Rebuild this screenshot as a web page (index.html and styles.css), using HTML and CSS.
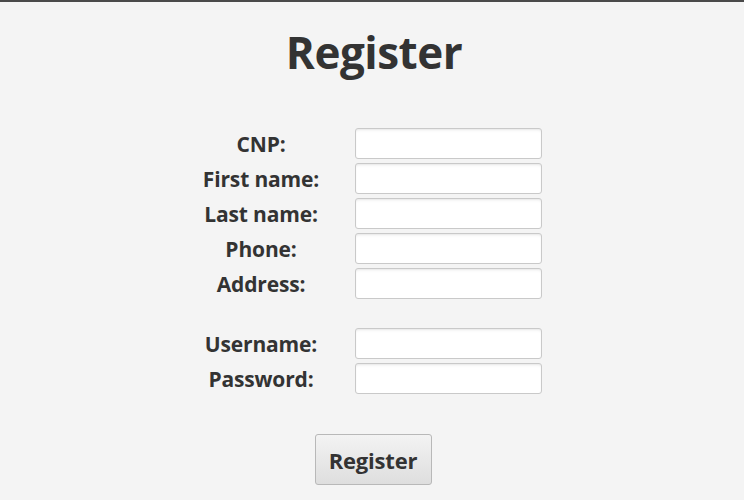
FILE: index.html
```html
<!DOCTYPE html>
<html>
<head>
<meta charset="utf-8">
<link rel="stylesheet" href="styles.css">
</head>
<body>
<div class="page">
  <h1 class="title">Register</h1>
  <form class="form">
    <div class="grid">
      <label class="lbl">CNP:</label><input class="field" type="text">
      <label class="lbl">First name:</label><input class="field" type="text">
      <label class="lbl">Last name:</label><input class="field" type="text">
      <label class="lbl">Phone:</label><input class="field" type="text">
      <label class="lbl">Address:</label><input class="field" type="text">
      <div class="spacer"></div>
      <label class="lbl">Username:</label><input class="field" type="text">
      <label class="lbl">Password:</label><input class="field" type="password">
    </div>
    <button class="btn" type="button">Register</button>
  </form>
</div>
</body>
</html>
```
FILE: styles.css
```css
html, body {
  margin: 0;
  padding: 0;
  height: 100%;
}
body {
  background: #f4f4f4;
  border-top: 2px solid #4a4a4a;
  box-sizing: border-box;
  font-family: "Open Sans", "Noto Sans", sans-serif;
  color: #333333;
}
.page {
  display: flex;
  flex-direction: column;
  align-items: center;
}
.title {
  margin: 20px 0 0 0;
  font-size: 44px;
  line-height: 60px;
  font-weight: 700;
  letter-spacing: -0.5px;
  transform: translateX(2px);
}
.form {
  display: flex;
  flex-direction: column;
  align-items: center;
  margin-top: 46px;
}
.grid {
  display: grid;
  grid-template-columns: 118px 187px;
  column-gap: 35px;
  row-gap: 4px;
  align-items: center;
}
.lbl {
  display: flex;
  justify-content: center;
  white-space: nowrap;
  font-size: 21px;
  font-weight: 700;
  letter-spacing: -0.15px;
}
.spacer {
  grid-column: 1 / 3;
  height: 21px;
}
.field {
  box-sizing: border-box;
  height: 31px;
  width: 187px;
  margin: 0;
  background: linear-gradient(#f7f7f7, #ffffff 4px);
  border: 1px solid #c9c9c9;
  border-radius: 3px;
  box-shadow: inset 0 1px 2px rgba(0,0,0,0.06);
  outline: none;
}
.btn {
  margin-top: 40px;
  margin-left: 2px;
  box-sizing: border-box;
  width: 117px;
  height: 51px;
  border: 1px solid #b8b8b8;
  border-radius: 3px;
  background: linear-gradient(#f3f3f3, #dedede);
  font-family: "Open Sans", "Noto Sans", sans-serif;
  font-size: 22px;
  font-weight: 700;
  color: #333333;
  letter-spacing: -0.2px;
  padding: 0;
}
```
